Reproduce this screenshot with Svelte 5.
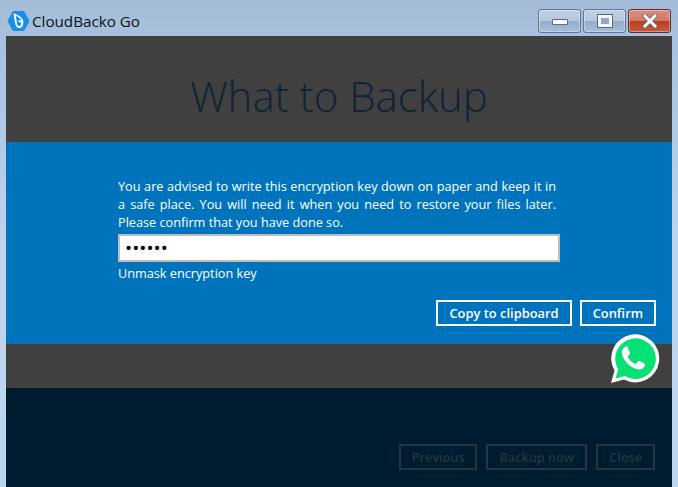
<script lang="ts">
	let masked = '••••••';
</script>

<div class="window">
	<header class="titlebar">
		<div class="brand">
			<svg class="logo" width="23" height="22" viewBox="0 0 23 22" aria-hidden="true">
				<path d="M7 1h9a2 2 0 0 1 1.700 1l4.300 8a2 2 0 0 1 0 2l-4.300 8a2 2 0 0 1-1.700 1H7a2 2 0 0 1-1.700-1L1 12a2 2 0 0 1 0-2l4.300-8A2 2 0 0 1 7 1z" fill="#1a8fe8" />
				<path d="M7.500 4.500l1.800 9.500a2.900 2.900 0 1 0 2.900-2.900" fill="none" stroke="#fff" stroke-width="1.800" stroke-linecap="round" />
				<path d="M7.500 4.500c4.500 1.500 8 4.200 8 8 0 2-1.200 3.800-3 4.600" fill="none" stroke="#fff" stroke-width="1.800" stroke-linecap="round" />
			</svg>
			<span class="app-name">CloudBacko Go</span>
		</div>
		<div class="controls">
			<div class="ctl"><span class="min"></span></div>
			<div class="ctl"><span class="max"></span></div>
			<div class="ctl close">
				<svg width="18" height="14" viewBox="0 0 18 14" aria-hidden="true">
					<path d="M4 2l10 10M14 2L4 12" stroke="#59606a" stroke-width="4.500" stroke-linecap="square" />
					<path d="M4 2l10 10M14 2L4 12" stroke="#fff" stroke-width="3" stroke-linecap="square" />
				</svg>
			</div>
		</div>
	</header>

	<main class="client">
		<section class="top">
			<h1>What to Backup</h1>
		</section>

		<section class="panel">
			<p>
				<span class="line">You are advised to write this encryption key down on paper and keep it in</span>
				<span class="line">a safe place. You will need it when you need to restore your files later.</span>
				<span>Please confirm that you have done so.</span>
			</p>
			<div class="keybox">{masked}</div>
			<div class="unmask">Unmask encryption key</div>
			<div class="actions">
				<button>Copy to clipboard</button>
				<button>Confirm</button>
			</div>
		</section>

		<div class="gap"></div>

		<footer class="bottom">
			<button class="dim">Previous</button>
			<button class="dim">Backup now</button>
			<button class="dim">Close</button>
		</footer>

		<svg class="whatsapp" width="50" height="50" viewBox="0 0 50 50" aria-hidden="true">
			<path d="M1 49l3.500-12.500A24 24 0 1 1 14 45.600z" fill="#fff" />
			<path d="M5.500 44.500l2.700-9.300A20.300 20.300 0 1 1 15 42z" fill="#06e074" />
			<path d="M18 12.500c-.8-.2-1.700-.2-2.500.2-2.200 1-3.800 3.200-3.700 5.800.2 3.700 2.200 7.400 5.500 10.800 3.400 3.500 7.300 5.700 11.200 6.200 2.400.2 4.700-.8 6-2.900.5-.8.600-1.700.4-2.500-.1-.4-.4-.6-.8-.8l-4.800-2.300c-.4-.2-.9-.1-1.200.2l-2 2.400c-.3.300-.7.400-1.100.3-2.800-1.100-5.700-3.800-7-6.600-.2-.4-.1-.8.100-1.100l1.700-2c.3-.3.300-.8.200-1.200l-2-5c-.1-.3-.4-.6-.7-.7z" fill="#fff" />
		</svg>
	</main>
</div>

<style>
	:global(body) {
		margin: 0;
		background: #a9c2dd;
	}

	.window {
		width: 678px;
		height: 487px;
		overflow: hidden;
		display: flex;
		flex-direction: column;
		padding: 0 5px 0 5px;
		box-sizing: border-box;
		background: linear-gradient(180deg, #a3bbd6 0%, #a8c1dc 8%, #bcd4ec 50%, #bdd6ef 100%);
		font-family: 'Open Sans', sans-serif;
	}

	.titlebar {
		height: 36px;
		flex: none;
		display: flex;
		justify-content: space-between;
		align-items: flex-start;
	}

	.brand {
		display: flex;
		align-items: center;
		gap: 2px;
		height: 24px;
		margin-top: 9px;
		margin-left: 2px;
	}

	.app-name {
		font-size: 15.200px;
		color: #0c1420;
	}

	.controls {
		display: flex;
		gap: 2px;
		margin-top: 9px;
		margin-right: 2px;
	}

	.ctl {
		width: 41px;
		height: 22px;
		border: 1px solid #5f7896;
		border-radius: 3px;
		display: flex;
		align-items: center;
		justify-content: center;
		background: linear-gradient(180deg, #bed0e5 0%, #b3c8e0 48%, #94aecb 50%, #a6bdd7 100%);
		box-shadow: inset 0 0 0 1px rgba(255, 255, 255, 0.35);
	}

	.min {
		width: 14px;
		height: 4px;
		background: #fff;
		border: 1px solid #5d6a7c;
		border-radius: 1px;
		margin-top: 2px;
		box-sizing: content-box;
	}

	.max {
		width: 8px;
		height: 6px;
		border: 3px solid #f4f6f8;
		outline: 1px solid #5d6a7c;
		background: #8ea9c8;
	}

	.close {
		background: linear-gradient(180deg, #d99080 0%, #d07a68 48%, #bb3c22 50%, #c65a3f 100%);
		border-color: #5c2f3b;
	}

	.client {
		position: relative;
		flex: 1;
		margin-left: 1px;
		display: flex;
		flex-direction: column;
		width: 666px;
	}

	.top {
		height: 106px;
		background: #404040;
		display: flex;
		align-items: center;
		justify-content: center;
	}

	h1 {
		margin: 0;
		font-size: 42px;
		font-weight: 300;
		color: #0f2338;
		position: relative;
		top: 6px;
	}

	.panel {
		height: 202px;
		box-sizing: border-box;
		background: #0073bd;
		padding: 35px 16px 0 112px;
		color: #fff;
		font-size: 12.700px;
	}

	p {
		margin: 0;
		width: 438px;
		line-height: 18px;
	}

	.line {
		display: block;
		text-align: justify;
		text-align-last: justify;
	}

	.keybox {
		width: 442px;
		height: 28px;
		box-sizing: border-box;
		margin-top: 3px;
		background: #fff;
		border: 2px solid #bdbdbd;
		color: #000;
		font-size: 19px;
		line-height: 24px;
		padding-left: 5px;
	}

	.unmask {
		margin-top: 2px;
		line-height: 18px;
	}

	.actions {
		display: flex;
		justify-content: flex-end;
		gap: 8px;
		margin-top: 18px;
	}

	button {
		height: 26px;
		padding: 0 11px;
		background: transparent;
		border: 2px solid #fff;
		color: #fff;
		font-family: inherit;
		font-size: 12.900px;
		font-weight: 600;
	}

	.gap {
		height: 44px;
		background: #404040;
	}

	.bottom {
		flex: 1;
		background: #001c30;
		display: flex;
		justify-content: flex-end;
		align-items: flex-start;
		gap: 9px;
		padding: 56px 17px 0 0;
	}

	.dim {
		border-color: #28343d;
		color: #28343d;
		font-size: 12.700px;
	}

	.whatsapp {
		position: absolute;
		left: 604px;
		top: 298px;
	}
</style>
